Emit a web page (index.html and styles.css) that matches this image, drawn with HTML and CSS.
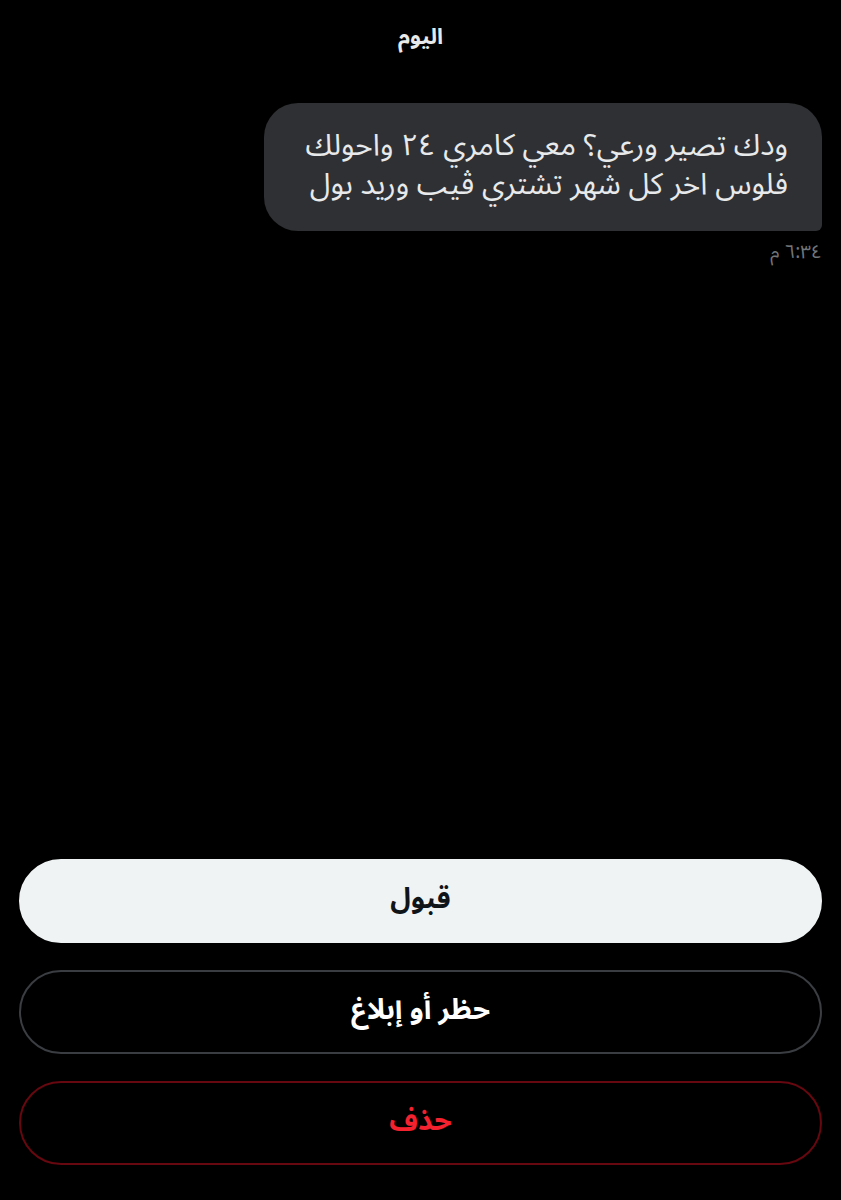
FILE: index.html
```html
<!DOCTYPE html>
<html lang="ar" dir="rtl">
<head>
<meta charset="utf-8">
<link rel="stylesheet" href="styles.css">
</head>
<body>
<div class="screen">
  <div class="day">اليوم</div>
  <div class="thread">
    <div class="bubble">
      <p class="line">ودك تصير ورعي؟ معي كامري ٢٤ واحولك</p>
      <p class="line">فلوس اخر كل شهر تشتري ڤيب وريد بول</p>
    </div>
    <div class="time">٦:٣٤ م</div>
  </div>
  <div class="actions">
    <button class="btn accept">قبول</button>
    <button class="btn block">حظر أو إبلاغ</button>
    <button class="btn delete">حذف</button>
  </div>
</div>
</body>
</html>
```
FILE: styles.css
```css
html, body {
  margin: 0;
  padding: 0;
  background: #000;
}
body {
  font-family: "Noto Sans Arabic", "DejaVu Sans", "Noto Sans", sans-serif;
  color: #e7e9ea;
}
.screen {
  width: 841px;
  height: 1200px;
  display: flex;
  flex-direction: column;
  box-sizing: border-box;
  padding: 0 19px 35px 19px;
}
.day {
  text-align: center;
  font-size: 22px;
  font-weight: 700;
  padding-top: 22px;
  height: 38px;
  line-height: 30px;
  margin-bottom: 43px;
}
.thread {
  display: flex;
  flex-direction: column;
  align-items: flex-start;
  flex: 1;
}
.bubble {
  background: #2f3033;
  border-radius: 34px 34px 6px 34px;
  padding: 23px 34px 27px 42px;
  font-size: 30px;
  line-height: 39px;
  color: #e7e9ea;
}
.line {
  margin: 0;
}
.time {
  margin-top: 9px;
  font-size: 19px;
  line-height: 24px;
  color: #71767b;
}
.actions {
  display: flex;
  flex-direction: column;
  gap: 27px;
}
.btn {
  height: 84px;
  border-radius: 42px;
  font-family: inherit;
  font-size: 28px;
  font-weight: 700;
  background: transparent;
  border: 2px solid transparent;
  cursor: pointer;
  padding: 0 0 4px 0;
}
.accept {
  background: #eff3f4;
  color: #0f1419;
  border-color: #eff3f4;
}
.block {
  color: #fff;
  border-color: #3a3d41;
}
.delete {
  color: #f4212e;
  border-color: #67070f;
}
```
